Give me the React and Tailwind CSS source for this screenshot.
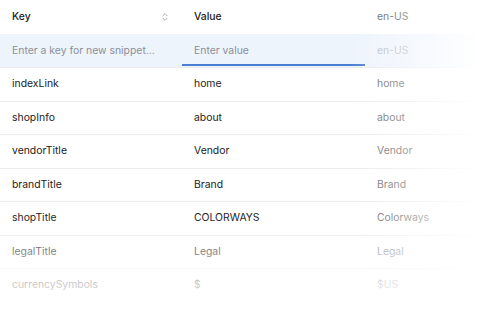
import React from 'react';
import { LuChevronsUpDown } from 'react-icons/lu';

const rows = [
  { key: 'indexLink', value: 'home', locale: 'home' },
  { key: 'shopInfo', value: 'about', locale: 'about' },
  { key: 'vendorTitle', value: 'Vendor', locale: 'Vendor' },
  { key: 'brandTitle', value: 'Brand', locale: 'Brand' },
  { key: 'shopTitle', value: 'COLORWAYS', locale: 'Colorways' },
  { key: 'legalTitle', value: 'Legal', locale: 'Legal' },
  { key: 'currencySymbols', value: '$', locale: '$US' },
];

const App = () => {
  return (
    <div
      className="relative w-[480px] h-[316px] overflow-hidden bg-white text-[10.4px] text-[#222] whitespace-nowrap"
      style={{ fontFamily: 'Inter, "Liberation Sans", sans-serif' }}
    >
      <div className="grid grid-cols-[182px_183px_1fr] h-[34px] items-center">
        <div className="flex items-center justify-between pl-3 pr-[12px] font-medium">
          <span>Key</span>
          <LuChevronsUpDown className="text-[#9a9a9a]" size={10} />
        </div>
        <div className="pl-3 font-medium">Value</div>
        <div className="pl-3 text-[#555]">en-US</div>
      </div>

      <div className="grid grid-cols-[182px_183px_1fr] h-[33px] items-center bg-[#eef4fc]">
        <div className="pl-3 text-[#8a8f98]">Enter a key for new snippet...</div>
        <div className="relative h-full flex items-center pl-3 text-[#8a8f98]">
          Enter value
          <div className="absolute left-0 right-0 bottom-[1px] h-[2px] bg-[#4b7fd1]" />
        </div>
        <div className="pl-3 text-[#b8bcc2]">en-US</div>
      </div>

      {rows.map((row) => (
        <div
          key={row.key}
          className="grid grid-cols-[182px_183px_1fr] h-[33.5px] items-center border-t border-[#ebebeb]"
        >
          <div className="pl-3">{row.key}</div>
          <div className="pl-3">{row.value}</div>
          <div className="pl-3 text-[#666]">{row.locale}</div>
        </div>
      ))}

      <div className="pointer-events-none absolute inset-y-0 right-0 w-[130px] bg-gradient-to-r from-white/0 via-white/45 to-white" />
      <div className="pointer-events-none absolute inset-x-0 bottom-0 h-[100px] bg-gradient-to-b from-white/0 via-white/60 to-white" />
    </div>
  );
};

export default App;
